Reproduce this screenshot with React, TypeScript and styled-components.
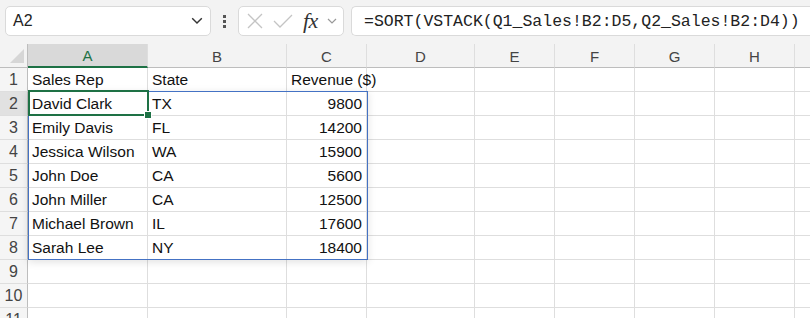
import styled, { createGlobalStyle } from 'styled-components';

const GlobalStyle = createGlobalStyle`
  html, body {
    margin: 0;
    padding: 0;
    background: #ffffff;
    overflow: hidden;
  }
`;

const COLUMNS = [
  { label: 'A', width: 120 },
  { label: 'B', width: 139 },
  { label: 'C', width: 80 },
  { label: 'D', width: 108 },
  { label: 'E', width: 80 },
  { label: 'F', width: 80 },
  { label: 'G', width: 80 },
  { label: 'H', width: 80 },
  { label: '', width: 80 },
];

const ROWS: string[][] = [
  ['Sales Rep', 'State', 'Revenue ($)'],
  ['David Clark', 'TX', '9800'],
  ['Emily Davis', 'FL', '14200'],
  ['Jessica Wilson', 'WA', '15900'],
  ['John Doe', 'CA', '5600'],
  ['John Miller', 'CA', '12500'],
  ['Michael Brown', 'IL', '17600'],
  ['Sarah Lee', 'NY', '18400'],
  [],
  [],
  [],
];

const GREEN = '#1e7145';
const GRID = '#dedede';

const Page = styled.div`
  width: 810px;
  height: 318px;
  overflow: hidden;
  background: #f3f3f3;
  font-family: 'Liberation Sans', Arial, sans-serif;
`;

const Toolbar = styled.div`
  display: flex;
  align-items: center;
  height: 44px;
  padding: 6px 0 8px 5px;
  box-sizing: border-box;
`;

const Field = styled.div<{ $width?: number }>`
  display: flex;
  align-items: center;
  box-sizing: border-box;
  height: 30px;
  ${(p) => (p.$width ? `width: ${p.$width}px;` : 'flex: 1;')}
  background: #ffffff;
  border: 1px solid #dadada;
  border-radius: 5px;
`;

const NameBox = styled(Field)`
  padding: 0 7px 0 7px;
  justify-content: space-between;
  font-size: 16px;
  color: #222;
`;

const Dots = styled.div`
  display: flex;
  flex-direction: column;
  gap: 2px;
  width: 27px;
  align-items: center;
  span {
    width: 3px;
    height: 3px;
    background: #555;
  }
`;

const IconBox = styled(Field)`
  padding: 0 4px 0 7px;
  gap: 9px;
`;

const Fx = styled.span`
  font-family: 'Liberation Serif', 'Times New Roman', serif;
  font-style: italic;
  font-size: 22px;
  line-height: 1;
  color: #333;
  margin-left: 1px;
  letter-spacing: -0.5px;
`;

const FormulaBox = styled(Field)`
  margin-left: 7px;
  border-right: none;
  border-radius: 5px 0 0 5px;
  padding-left: 12px;
  font-family: 'Liberation Mono', 'DejaVu Sans Mono', monospace;
  font-size: 16.5px;
  color: #222;
  white-space: nowrap;
`;

const Sheet = styled.div`
  position: relative;
  display: grid;
  grid-template-columns: 28px ${COLUMNS.map((c) => `${c.width}px`).join(' ')};
  grid-auto-rows: 24px;
  background: #ffffff;
`;

const Corner = styled.div`
  background: #f3f3f3;
  border-right: 1px solid #bdbdbd;
  border-bottom: 1px solid #bdbdbd;
  display: flex;
  align-items: flex-end;
  justify-content: flex-end;
  padding: 0 3px 4px 0;
  box-sizing: border-box;
`;

const ColHead = styled.div<{ $active?: boolean }>`
  display: flex;
  align-items: center;
  justify-content: center;
  box-sizing: border-box;
  background: ${(p) => (p.$active ? '#d9d9d9' : '#f3f3f3')};
  border-right: 1px solid ${GRID};
  border-bottom: ${(p) => (p.$active ? `2px solid ${GREEN}` : '1px solid #bdbdbd')};
  color: ${(p) => (p.$active ? GREEN : '#444')};
  font-size: 15px;
  padding-top: 1px;
`;

const RowHead = styled.div<{ $active?: boolean }>`
  display: flex;
  align-items: flex-end;
  justify-content: center;
  box-sizing: border-box;
  padding-bottom: 2px;
  background: ${(p) => (p.$active ? '#e1e1e1' : '#f5f5f5')};
  border-right: 1px solid #bdbdbd;
  border-bottom: 1px solid ${GRID};
  color: #444;
  font-size: 16px;
`;

const Cell = styled.div<{ $num?: boolean }>`
  display: flex;
  align-items: flex-end;
  justify-content: ${(p) => (p.$num ? 'flex-end' : 'flex-start')};
  box-sizing: border-box;
  padding: 0 4px 2px 4px;
  border-right: 1px solid ${GRID};
  border-bottom: 1px solid ${GRID};
  color: #111;
  font-size: 15.5px;
  white-space: nowrap;
  overflow: visible;
`;

const SpillRange = styled.div`
  position: absolute;
  left: 28px;
  top: 47px;
  width: 340px;
  height: 169px;
  box-sizing: border-box;
  border: 1px solid #4472c4;
  box-shadow: 0 2px 8px rgba(0, 0, 0, 0.12);
  pointer-events: none;
`;

const ActiveCell = styled.div`
  position: absolute;
  left: 28px;
  top: 46px;
  width: 121px;
  height: 26px;
  box-sizing: border-box;
  border: 2px solid ${GREEN};
  pointer-events: none;
  &::after {
    content: '';
    position: absolute;
    right: -5px;
    bottom: -5px;
    width: 6px;
    height: 6px;
    background: ${GREEN};
    border: 1px solid #fff;
  }
`;

function Chevron({ size = 10, color = '#444' }: { size?: number; color?: string }) {
  return (
    <svg width={size} height={size * 0.6} viewBox="0 0 10 6">
      <path d="M1 1 L5 5 L9 1" fill="none" stroke={color} strokeWidth="1.2" />
    </svg>
  );
}

export default function App() {
  return (
    <Page>
      <GlobalStyle />
      <Toolbar>
        <NameBox $width={206}>
          <span>A2</span>
          <Chevron size={12} color="#333" />
        </NameBox>
        <Dots>
          <span />
          <span />
          <span />
        </Dots>
        <IconBox $width={106}>
          <svg width="18" height="18" viewBox="0 0 18 18">
            <path d="M2 2 L16 16 M16 2 L2 16" stroke="#c4c4c4" strokeWidth="1.3" fill="none" />
          </svg>
          <svg width="20" height="18" viewBox="0 0 20 18">
            <path d="M1 9 L7 15 L19 3" stroke="#c4c4c4" strokeWidth="1.3" fill="none" />
          </svg>
          <Fx>fx</Fx>
          <Chevron size={10} color="#999" />
        </IconBox>
        <FormulaBox>=SORT(VSTACK(Q1_Sales!B2:D5,Q2_Sales!B2:D4))</FormulaBox>
      </Toolbar>
      <Sheet>
        <Corner>
          <svg width="14" height="14" viewBox="0 0 14 14">
            <path d="M14 0 L14 14 L0 14 Z" fill="#d6d6d6" />
          </svg>
        </Corner>
        {COLUMNS.map((c, i) => (
          <ColHead key={i} $active={c.label === 'A'}>
            {c.label}
          </ColHead>
        ))}
        {ROWS.map((row, r) => [
          <RowHead key={`h${r}`} $active={r === 1}>
            {r + 1}
          </RowHead>,
          ...COLUMNS.map((_, c) => (
            <Cell key={`${r}-${c}`} $num={c === 2 && r > 0}>
              {row[c] ?? ''}
            </Cell>
          )),
        ])}
        <SpillRange />
        <ActiveCell />
      </Sheet>
    </Page>
  );
}
